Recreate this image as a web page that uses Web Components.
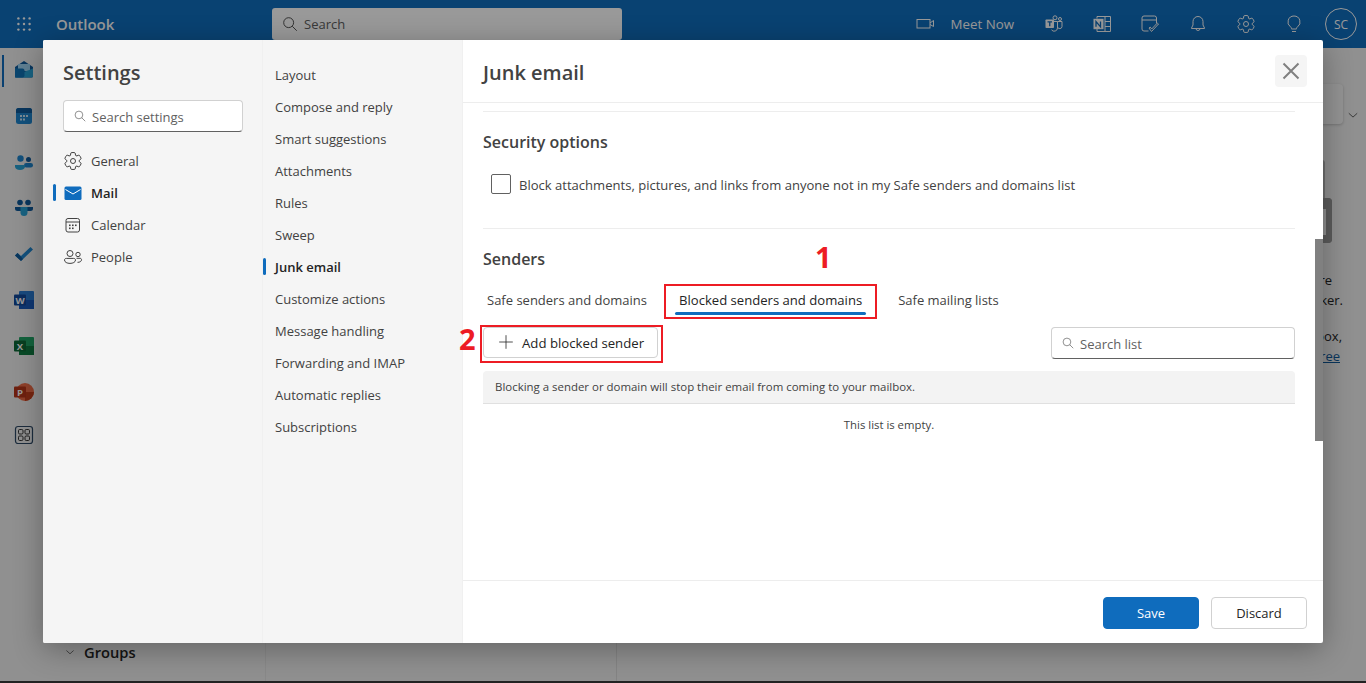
<!DOCTYPE html>
<html lang="en">
<head>
<meta charset="utf-8">
<title>Outlook - Junk email</title>
<style>
  html, body { margin: 0; height: 100%; overflow: hidden; }
  body { font-family: "Open Sans", "Liberation Sans", sans-serif; }
</style>
</head>
<body>
<outlook-app></outlook-app>

<script>
(function () {
  const GEAR = 'M1.91 7.38A8.5 8.5 0 0 1 3.7 4.3a.5.5 0 0 1 .54-.13l1.92.68a1 1 0 0 0 1.32-.76l.36-2a.5.5 0 0 1 .4-.4 8.53 8.53 0 0 1 3.55 0c.2.04.35.2.38.4l.37 2a1 1 0 0 0 1.32.76l1.92-.68a.5.5 0 0 1 .54.13 8.5 8.5 0 0 1 1.78 3.08c.06.2 0 .4-.15.54l-1.56 1.32a1 1 0 0 0 0 1.52l1.56 1.32a.5.5 0 0 1 .15.54 8.5 8.5 0 0 1-1.78 3.08.5.5 0 0 1-.54.13l-1.92-.68a1 1 0 0 0-1.32.76l-.37 2a.5.5 0 0 1-.38.4 8.53 8.53 0 0 1-3.56 0 .5.5 0 0 1-.39-.4l-.36-2a1 1 0 0 0-1.32-.76l-1.92.68a.5.5 0 0 1-.54-.13 8.5 8.5 0 0 1-1.78-3.08.5.5 0 0 1 .15-.54l1.56-1.32a1 1 0 0 0 0-1.52L2.06 7.92a.5.5 0 0 1-.15-.54Z';

  const ICONS = {
    gear: `<path d="${GEAR}" fill="none" stroke="currentColor"/><circle cx="10" cy="10" r="2.5" fill="none" stroke="currentColor"/>`,
    search: `<circle cx="8.5" cy="8.5" r="5.5" fill="none" stroke="currentColor"/><path d="M12.5 12.5 17.500 17.500" stroke="currentColor" fill="none"/>`,
    mail: `<rect x="1.500" y="3.500" width="17" height="13.500" rx="1.500" fill="#0f6cbd"/><path d="M2.500 6.500 10 11l7.500-4.500" fill="none" stroke="#fff"/>`,
    calendar: `<rect x="3" y="3.500" width="13.500" height="13.500" rx="2" fill="none" stroke="currentColor"/><path d="M3 7h13.500" stroke="currentColor"/><g fill="currentColor"><rect x="6" y="9.500" width="1.600" height="1.600"/><rect x="9" y="9.500" width="1.600" height="1.600"/><rect x="12" y="9.500" width="1.600" height="1.600"/><rect x="6" y="12.500" width="1.600" height="1.600"/><rect x="9" y="12.500" width="1.600" height="1.600"/></g>`,
    people: `<g fill="none" stroke="currentColor"><circle cx="7" cy="6.500" r="3"/><circle cx="15" cy="7.500" r="2.200"/><path d="M1.500 13c0-1 .8-1.600 1.800-1.600h7.400c1 0 1.800.6 1.800 1.600 0 2.200-2.600 3.400-5.500 3.400S1.500 15.200 1.500 13Z"/><path d="M13.500 11.300h3.500c.9 0 1.500.5 1.500 1.400 0 1.700-1.600 2.700-4 2.600"/></g>`,
    plus: `<path d="M10 1.500v17M1.500 10h17" stroke="currentColor" fill="none"/>`,
    close: `<path d="M2.500 2.500 17.500 17.500M17.500 2.500 2.500 17.500" stroke="currentColor" stroke-width="2" fill="none"/>`,
    chevron: `<path d="M4 7.500 10 13l6-5.500" fill="none" stroke="currentColor"/>`,
    waffle: `<g fill="currentColor"><circle cx="3" cy="3" r="1.500"/><circle cx="10" cy="3" r="1.500"/><circle cx="17" cy="3" r="1.500"/><circle cx="3" cy="10" r="1.500"/><circle cx="10" cy="10" r="1.500"/><circle cx="17" cy="10" r="1.500"/><circle cx="3" cy="17" r="1.500"/><circle cx="10" cy="17" r="1.500"/><circle cx="17" cy="17" r="1.500"/></g>`,
    video: `<g fill="none" stroke="currentColor"><rect x="1" y="5.500" width="13" height="8.500"/><path d="M14 9l3.500-2.500v6L14 10.500"/></g>`,
    teams: `<g fill="none" stroke="currentColor"><circle cx="11" cy="3.800" r="2"/><circle cx="16" cy="5" r="1.500"/><path d="M8 7.500h5.500v6.500a3.300 3.300 0 0 1-6 1.800M13.500 7.500h4.500v5a2.300 2.300 0 0 1-4.500.5"/></g><rect x="1.500" y="5.500" width="8.500" height="8.500" rx=".8" fill="currentColor"/><path d="M3.500 7.800h4.500M5.750 7.800v4.400" stroke="#0f6cbd" stroke-width="1.300"/>`,
    onenote: `<g fill="none" stroke="currentColor"><path d="M5 4.500V2.500h13.500v15H5v-2.500"/><path d="M13 2.500v15M13 7.500h5.500M13 12.500h5.500"/></g><rect x="1.500" y="4.800" width="10" height="10.400" fill="currentColor"/><path d="M4 12.800V7.500l4.500 5.300V7.500" fill="none" stroke="#0f6cbd" stroke-width="1.300"/>`,
    todo: `<g fill="none" stroke="currentColor"><path d="M8.500 17H4a2 2 0 0 1-2-2V4a2 2 0 0 1 2-2h10.500a2 2 0 0 1 2 2v5"/><path d="M2 6h14.500"/><path d="M9 14l2.500 3.500 7-7.500-1.200-1-5.600 6-1.500-1.900Z"/></g>`,
    bell: `<path d="M10 2.500a5 5 0 0 1 5 5v3.500l1.500 3v.5h-13V14L5 11V7.500a5 5 0 0 1 5-5ZM8 14.500a2 2 0 0 0 4 0" fill="none" stroke="currentColor"/>`,
    bulb: `<path d="M10 2a6 6 0 0 0-3.500 10.900c.6.500 1 1 1 1.600v.5h5v-.5c0-.6.4-1.100 1-1.600A6 6 0 0 0 10 2ZM8 17.500h4" fill="none" stroke="currentColor"/>`,
    outlook: `<path d="M1 8 10 2l9 6v9a1.500 1.500 0 0 1-1.500 1.500h-15A1.500 1.500 0 0 1 1 17Z" fill="#0f5a9c"/><rect x="4" y="5" width="12" height="7" fill="#9fd4f4"/><path d="M1 9.500 10 13l9-3.500V17a1.500 1.500 0 0 1-1.500 1.500h-15A1.500 1.500 0 0 1 1 17Z" fill="#29a4d8"/><path d="M1 9.500h7.500a2 2 0 0 1 2 2v5a2 2 0 0 1-2 2H1Z" fill="#1273b8"/>`,
    cal: `<rect x="2" y="2" width="16" height="16" rx="2.500" fill="#1f86cf"/><path d="M2 7V4.500A2.500 2.500 0 0 1 4.500 2h11A2.500 2.500 0 0 1 18 4.500V7Z" fill="#0f5a9c"/><g fill="#cfe7f7"><rect x="6" y="9" width="2" height="2"/><rect x="9" y="9" width="2" height="2"/><rect x="12" y="9" width="2" height="2"/><rect x="6" y="12.500" width="2" height="2"/><rect x="9" y="12.500" width="2" height="2"/></g>`,
    contacts: `<circle cx="6.500" cy="5.500" r="3.200" fill="#1f86cf"/><circle cx="14.500" cy="6.500" r="2.500" fill="#0f5a9c"/><rect x="10" y="10" width="9" height="4.500" rx="2.200" fill="#1f86cf"/><path d="M1 12h10v1.500c0 2-2 3.500-5 3.500s-5-1.500-5-3.500Z" fill="#29a4d8"/>`,
    engage: `<circle cx="6" cy="4.500" r="2.800" fill="#0f5a9c"/><circle cx="14" cy="4.500" r="2.800" fill="#0f5a9c"/><path d="M1 9h6.500v4H3.500A2.500 2.500 0 0 1 1 10.500Z" fill="#0f5a9c"/><path d="M12.500 9H19v1.500a2.500 2.500 0 0 1-2.500 2.500h-4Z" fill="#0f5a9c"/><path d="M6.500 9h7v5.500a3.500 3.500 0 0 1-7 0Z" fill="#29a4d8"/>`,
    check: `<path d="M1 10.500 7 16 19 4.500l-2.500-2.500L7 11 3.500 8Z" fill="#1f86cf"/><path d="M1 10.500 7 16l2-2-5.500-6Z" fill="#0f5a9c"/>`,
    word: `<rect x="5" y="1" width="15" height="18" rx="1" fill="#2b7cd3"/><rect x="5" y="10" width="15" height="9" fill="#185abd"/><rect x="0" y="4.500" width="12" height="11" rx="1" fill="#134a9c"/><text x="6" y="13.500" text-anchor="middle" font-family="Open Sans, sans-serif" font-size="9.500" font-weight="700" fill="#fff">W</text>`,
    excel: `<rect x="5" y="1" width="15" height="18" rx="1" fill="#21a366"/><rect x="5" y="10" width="15" height="9" fill="#107c41"/><rect x="0" y="4.500" width="12" height="11" rx="1" fill="#0e6a38"/><text x="6" y="13.500" text-anchor="middle" font-family="Open Sans, sans-serif" font-size="9.500" font-weight="700" fill="#fff">X</text>`,
    powerpoint: `<circle cx="11" cy="10" r="9" fill="#ed6c47"/><path d="M11 10v9a9 9 0 0 0 9-9Z" fill="#c43e1c"/><rect x="0" y="4.500" width="12" height="11" rx="1" fill="#b7361a"/><text x="6" y="13.500" text-anchor="middle" font-family="Open Sans, sans-serif" font-size="9.500" font-weight="700" fill="#fff">P</text>`,
    apps: `<g fill="none" stroke="#2f4a66"><rect x="1.500" y="1.500" width="17" height="17" rx="2.500" stroke-width="1.200"/></g><g fill="none" stroke="#333"><rect x="4.500" y="4.500" width="4.500" height="4.500" rx="1.200"/><rect x="11" y="4.500" width="4.500" height="4.500" rx="1.200"/><rect x="4.500" y="11" width="4.500" height="4.500" rx="1.200"/><rect x="11" y="11" width="4.500" height="4.500" rx="1.200"/></g>`,
  };

  class UiIcon extends HTMLElement {
    constructor() {
      super();
      this.attachShadow({ mode: 'open' });
    }

    connectedCallback() {
      const size = this.getAttribute('size') || 20;
      this.shadowRoot.innerHTML = `
        <style>
          :host { display: inline-flex; flex: none; width: ${size}px; height: ${size}px; }
          svg { display: block; width: 100%; height: 100%; overflow: visible; }
        </style>
        <svg viewBox="0 0 20 20" aria-hidden="true">${ICONS[this.getAttribute('name')] || ''}</svg>`;
    }
  }
  customElements.define('ui-icon', UiIcon);

  const headerTemplate = document.createElement('template');
  headerTemplate.innerHTML = `
    <style>
      :host {
        display: flex;
        align-items: center;
        flex: none;
        height: 48px;
        background: #106ebe;
        color: #fff;
      }
      .waffle { margin: 0 0 0 16px; }
      .brand { margin-left: 24px; width: 216px; font-size: 15px; font-weight: 600; }
      .search {
        display: flex;
        align-items: center;
        gap: 5px;
        box-sizing: border-box;
        width: 350px;
        height: 32px;
        padding-left: 9px;
        background: #fff;
        border-radius: 3px;
        color: #424242;
        font-size: 13px;
      }
      .search span { color: #616161; }
      .tools { display: flex; align-items: center; margin-left: auto; padding-right: 9px; }
      .meet { display: flex; align-items: center; gap: 15px; margin-right: 30px; font-size: 13.300px; }
      .tools > ui-icon { margin-right: 28px; }
      .tools > ui-icon.last { margin-right: 21px; }
      .avatar {
        display: flex;
        align-items: center;
        justify-content: center;
        box-sizing: border-box;
        width: 32px;
        height: 32px;
        border: 1px solid #fff;
        border-radius: 50%;
        font-size: 12px;
      }
    </style>
    <ui-icon class="waffle" name="waffle" size="16"></ui-icon>
    <div class="brand">Outlook</div>
    <div class="search"><ui-icon name="search" size="18"></ui-icon><span>Search</span></div>
    <div class="tools">
      <div class="meet"><ui-icon name="video"></ui-icon>Meet Now</div>
      <ui-icon name="teams"></ui-icon>
      <ui-icon name="onenote"></ui-icon>
      <ui-icon name="todo"></ui-icon>
      <ui-icon name="bell"></ui-icon>
      <ui-icon name="gear"></ui-icon>
      <ui-icon class="last" name="bulb"></ui-icon>
      <div class="avatar">SC</div>
    </div>`;

  class OutlookHeader extends HTMLElement {
    constructor() {
      super();
      this.attachShadow({ mode: 'open' });
      this.shadowRoot.append(headerTemplate.content.cloneNode(true));
    }
  }
  customElements.define('outlook-header', OutlookHeader);

  const railTemplate = document.createElement('template');
  railTemplate.innerHTML = `
    <style>
      :host {
        display: flex;
        flex-direction: column;
        flex: none;
        width: 48px;
        margin-top: -2px;
      }
      .item { display: flex; align-items: center; height: 46px; padding-left: 14px; position: relative; }
      .item.active { margin-bottom: 1px; }
      .item.low { margin-top: 1px; }
      .item.apps { margin-top: -3px; }
      .item.active::before {
        content: '';
        position: absolute;
        left: 2px;
        top: 9px;
        bottom: 5px;
        width: 2px;
        background: #0f6cbd;
      }
    </style>
    <div class="item active"><ui-icon name="outlook"></ui-icon></div>
    <div class="item"><ui-icon name="cal"></ui-icon></div>
    <div class="item low"><ui-icon name="contacts"></ui-icon></div>
    <div class="item" style="margin-top: -1px"><ui-icon name="engage"></ui-icon></div>
    <div class="item low"><ui-icon name="check"></ui-icon></div>
    <div class="item" style="margin-top: -1px"><ui-icon name="word"></ui-icon></div>
    <div class="item"><ui-icon name="excel"></ui-icon></div>
    <div class="item"><ui-icon name="powerpoint"></ui-icon></div>
    <div class="item apps"><ui-icon name="apps"></ui-icon></div>`;

  class OutlookRail extends HTMLElement {
    constructor() {
      super();
      this.attachShadow({ mode: 'open' });
      this.shadowRoot.append(railTemplate.content.cloneNode(true));
    }
  }
  customElements.define('outlook-rail', OutlookRail);

  class NavItem extends HTMLElement {
    constructor() {
      super();
      this.attachShadow({ mode: 'open' });
      const name = this.getAttribute('icon');
      this.shadowRoot.innerHTML = `
        <style>
          :host {
            display: flex;
            align-items: center;
            gap: 8px;
            position: relative;
            height: 32px;
            color: #424242;
            font-size: 13px;
          }
          :host([active]) { color: #242424; font-weight: 600; }
          :host([active])::before {
            content: '';
            position: absolute;
            left: var(--bar-left, -10px);
            top: 7px;
            width: 2.500px;
            height: 17px;
            border-radius: 2px;
            background: #0f6cbd;
          }
        </style>
        ${name ? `<ui-icon name="${name}"></ui-icon>` : ''}
        <slot></slot>`;
    }
  }
  customElements.define('nav-item', NavItem);

  const fieldTemplate = document.createElement('template');
  fieldTemplate.innerHTML = `
    <style>
      :host {
        display: flex;
        align-items: center;
        gap: 5px;
        box-sizing: border-box;
        height: 32px;
        padding-left: 9px;
        background: #fff;
        border: 1px solid #d1d1d1;
        border-bottom-color: #616161;
        border-radius: 4px;
        color: #616161;
        font-size: 13px;
      }
      span { position: relative; top: 1px; }
    </style>
    <ui-icon name="search" size="14"></ui-icon>
    <span><slot></slot></span>`;

  class SearchField extends HTMLElement {
    constructor() {
      super();
      this.attachShadow({ mode: 'open' });
      this.shadowRoot.append(fieldTemplate.content.cloneNode(true));
    }
  }
  customElements.define('search-field', SearchField);

  const buttonTemplate = document.createElement('template');
  buttonTemplate.innerHTML = `
    <style>
      :host {
        display: inline-flex;
        align-items: center;
        justify-content: center;
        box-sizing: border-box;
        width: 96px;
        height: 32px;
        background: #fff;
        border: 1px solid #d1d1d1;
        border-radius: 4px;
        color: #242424;
        font-size: 13px;
        font-weight: 500;
      }
      :host([primary]) { background: #0f6cbd; border-color: #0f6cbd; color: #fff; }
    </style>
    <slot></slot>`;

  class UiButton extends HTMLElement {
    constructor() {
      super();
      this.attachShadow({ mode: 'open' });
      this.shadowRoot.append(buttonTemplate.content.cloneNode(true));
    }
  }
  customElements.define('ui-button', UiButton);

  const markTemplate = document.createElement('template');
  markTemplate.innerHTML = `
    <style>
      :host {
        display: block;
        position: absolute;
        box-sizing: border-box;
        border: 2px solid #ed1c24;
        pointer-events: none;
      }
      span {
        position: absolute;
        color: #ed1c24;
        font-size: 29px;
        font-weight: 700;
        line-height: 30px;
      }
    </style>
    <span></span>`;

  // red annotation box with its step number
  class StepMark extends HTMLElement {
    constructor() {
      super();
      this.attachShadow({ mode: 'open' });
      this.shadowRoot.append(markTemplate.content.cloneNode(true));
      const number = this.shadowRoot.querySelector('span');
      number.textContent = this.getAttribute('step');
      number.style.cssText = this.getAttribute('number-style');
    }
  }
  customElements.define('step-mark', StepMark);

  const panelTemplate = document.createElement('template');
  panelTemplate.innerHTML = `
    <style>
      :host { display: block; flex: 1; padding: 0 28px 0 20px; position: relative; color: #424242; }
      hr { margin: 0; border: 0; border-top: 1px solid #ededed; }
      h3 { margin: 0; font-size: 16px; line-height: 22px; font-weight: 600; }
      .check { display: flex; align-items: center; gap: 8px; margin: 21px 0 34px; padding-left: 8px; font-size: 13.060px; }
      .check span { position: relative; top: 1px; }
      .box { box-sizing: border-box; width: 20px; height: 20px; border: 1px solid #616161; border-radius: 2px; }
      .tabs { display: flex; position: relative; height: 34px; margin-top: 14px; font-size: 13px; line-height: 32px; }
      .tab { position: relative; padding: 0 4px; white-space: nowrap; }
      .tab.current { color: #242424; font-size: 13.100px; font-weight: 500; }
      .tab.current::after {
        content: '';
        position: absolute;
        left: 0;
        right: 0;
        top: 28px;
        height: 3px;
        border-radius: 2px;
        background: #0f6cbd;
      }
      .toolbar { display: flex; justify-content: space-between; position: relative; margin-top: 9px; }
      .add {
        display: flex;
        align-items: center;
        gap: 8px;
        box-sizing: border-box;
        width: 175px;
        height: 31px;
        padding: 1px 0 0 14px;
        border: 1px solid #d1d1d1;
        border-radius: 4px;
        color: #242424;
        font-size: 13.200px;
        font-weight: 500;
      }
      .add ui-icon { color: #242424; margin-top: -2px; }
      search-field { width: 244px; }
      .info {
        box-sizing: border-box;
        height: 33px;
        margin-top: 12px;
        padding-left: 12px;
        background: #f3f3f3;
        border-bottom: 1px solid #e0e0e0;
        border-radius: 4px 4px 0 0;
        font-size: 11.450px;
        line-height: 32px;
      }
      .empty { margin-top: 11px; text-align: center; font-size: 11.350px; line-height: 20px; }
      .thumb { position: absolute; right: 0; top: 136px; width: 8px; height: 202px; background: #808080; }
    </style>
    <hr style="margin-top: 8px">
    <h3 style="margin-top: 19px">Security options</h3>
    <div class="check">
      <div class="box"></div>
      <span>Block attachments, pictures, and links from anyone not in my Safe senders and domains list</span>
    </div>
    <hr>
    <h3 style="margin-top: 19px">Senders</h3>
    <div class="tabs">
      <div class="tab" style="margin-right: 24px">Safe senders and domains</div>
      <div class="tab current" style="margin-right: 28px">Blocked senders and domains
        <step-mark step="1" style="left: -11px; right: -11px; top: 0; height: 35px"
          number-style="left: 149px; top: -44px"></step-mark>
      </div>
      <div class="tab">Safe mailing lists</div>
    </div>
    <div class="toolbar">
      <div class="add"><ui-icon name="plus" size="16"></ui-icon>Add blocked sender</div>
      <search-field>Search list</search-field>
      <step-mark step="2" style="left: -3px; top: -2px; width: 183px; height: 38px"
        number-style="left: -23px; top: -3px"></step-mark>
    </div>
    <div class="info">Blocking a sender or domain will stop their email from coming to your mailbox.</div>
    <div class="empty">This list is empty.</div>
    <div class="thumb"></div>`;

  class JunkPanel extends HTMLElement {
    constructor() {
      super();
      this.attachShadow({ mode: 'open' });
      this.shadowRoot.append(panelTemplate.content.cloneNode(true));
    }
  }
  customElements.define('junk-panel', JunkPanel);

  const dialogTemplate = document.createElement('template');
  dialogTemplate.innerHTML = `
    <style>
      :host {
        display: flex;
        position: absolute;
        left: 43px;
        top: 40px;
        width: 1280px;
        height: 603px;
        background: #fff;
        border-radius: 2px;
        box-shadow: 0 6px 30px rgba(0, 0, 0, .32);
        overflow: hidden;
      }
      .col { box-sizing: border-box; background: #f5f5f5; }
      .first { width: 220px; padding: 20px 20px 0; border-right: 1px solid #f0f0f0; }
      h2 { margin: 0; color: #424242; font-size: 20px; line-height: 26px; font-weight: 600; }
      search-field { width: 180px; margin: 14px 0 13px; }
      .second { width: 200px; padding: 19px 0 0 12px; border-right: 1px solid #f0f0f0; --bar-left: -12px; }
      .main { display: flex; flex-direction: column; flex: 1; min-width: 0; }
      .head {
        display: flex;
        justify-content: space-between;
        box-sizing: border-box;
        height: 63px;
        padding: 15px 16px 0 20px;
        border-bottom: 1px solid #ededed;
      }
      h1 { margin: 5px 0 0; color: #424242; font-size: 20px; line-height: 26px; font-weight: 600; }
      .close {
        display: flex;
        align-items: center;
        justify-content: center;
        width: 32px;
        height: 32px;
        background: #f5f5f5;
        border-radius: 4px;
        color: #808080;
      }
      .foot {
        display: flex;
        justify-content: flex-end;
        gap: 12px;
        box-sizing: border-box;
        height: 63px;
        padding: 16px 16px 0 0;
        border-top: 1px solid #ededed;
      }
    </style>
    <div class="col first">
      <h2>Settings</h2>
      <search-field>Search settings</search-field>
      <nav-item icon="gear">General</nav-item>
      <nav-item icon="mail" active>Mail</nav-item>
      <nav-item icon="calendar">Calendar</nav-item>
      <nav-item icon="people">People</nav-item>
    </div>
    <div class="col second">
      <nav-item>Layout</nav-item>
      <nav-item>Compose and reply</nav-item>
      <nav-item>Smart suggestions</nav-item>
      <nav-item>Attachments</nav-item>
      <nav-item>Rules</nav-item>
      <nav-item>Sweep</nav-item>
      <nav-item active>Junk email</nav-item>
      <nav-item>Customize actions</nav-item>
      <nav-item>Message handling</nav-item>
      <nav-item>Forwarding and IMAP</nav-item>
      <nav-item>Automatic replies</nav-item>
      <nav-item>Subscriptions</nav-item>
    </div>
    <div class="main">
      <div class="head">
        <h1>Junk email</h1>
        <div class="close"><ui-icon name="close"></ui-icon></div>
      </div>
      <junk-panel></junk-panel>
      <div class="foot">
        <ui-button primary>Save</ui-button>
        <ui-button>Discard</ui-button>
      </div>
    </div>`;

  class SettingsDialog extends HTMLElement {
    constructor() {
      super();
      this.attachShadow({ mode: 'open' });
      this.shadowRoot.append(dialogTemplate.content.cloneNode(true));
    }
  }
  customElements.define('settings-dialog', SettingsDialog);

  const appTemplate = document.createElement('template');
  appTemplate.innerHTML = `
    <style>
      :host {
        display: flex;
        flex-direction: column;
        position: relative;
        width: 1366px;
        height: 683px;
        background: #f0f0f0;
        overflow: hidden;
      }
      .body { display: flex; flex: 1; min-height: 0; }
      .folders {
        display: flex;
        align-items: flex-end;
        gap: 8px;
        box-sizing: border-box;
        width: 218px;
        padding: 0 0 19px 16px;
        border-right: 1px solid #e4e4e4;
        color: #242424;
        font-size: 14.700px;
        font-weight: 600;
      }
      .folders ui-icon { margin-bottom: 4px; }
      .list { box-sizing: border-box; width: 351px; border-right: 1px solid #dcdcdc; }
      .reading { flex: 1; padding-top: 36px; color: #242424; font-size: 13px; line-height: 20px; text-align: right; }
      .picker { display: flex; justify-content: flex-end; align-items: flex-end; gap: 3px; padding-right: 6px; }
      .picker div { width: 120px; height: 40px; background: #f5f5f5; border-radius: 4px; box-shadow: 0 1px 3px rgba(0, 0, 0, .2); }
      .picker ui-icon { margin-bottom: 2px; }
      .art { display: flex; flex-direction: column; align-items: flex-end; margin: 36px 34px 27px 0; }
      .art .top { width: 60px; height: 38px; margin-right: 7px; background: #b7b7b7; border-radius: 0 3px 0 0; }
      .art .low {
        box-sizing: border-box;
        width: 60px;
        height: 45px;
        background: #eee;
        border: solid #999;
        border-width: 11px 6px 8px 0;
        border-radius: 0 4px 4px 0;
      }
      .reading a { color: #0f5a9c; }
      .gap { height: 16px; }
      .bottom { flex: none; height: 2px; background: #3a3a3a; }
      .scrim { position: absolute; inset: 0; background: rgba(0, 0, 0, .4); }
    </style>
    <outlook-header></outlook-header>
    <div class="body">
      <outlook-rail></outlook-rail>
      <div class="folders"><ui-icon name="chevron" size="12"></ui-icon>Groups</div>
      <div class="list"></div>
      <div class="reading">
        <div class="picker"><div></div><ui-icon name="chevron" size="14"></ui-icon></div>
        <div class="art"><div class="top"></div><div class="low"></div></div>
        <div style="padding-right: 34px">are</div>
        <div style="padding-right: 23px">blocker.</div>
        <div class="gap"></div>
        <div style="padding-right: 24px">inbox,</div>
        <div style="padding-right: 26px"><a href="#">free</a></div>
      </div>
    </div>
    <div class="bottom"></div>
    <div class="scrim"></div>
    <settings-dialog></settings-dialog>`;

  class OutlookApp extends HTMLElement {
    constructor() {
      super();
      this.attachShadow({ mode: 'open' });
      this.shadowRoot.append(appTemplate.content.cloneNode(true));
    }
  }
  customElements.define('outlook-app', OutlookApp);
})();
</script>
</body>
</html>
